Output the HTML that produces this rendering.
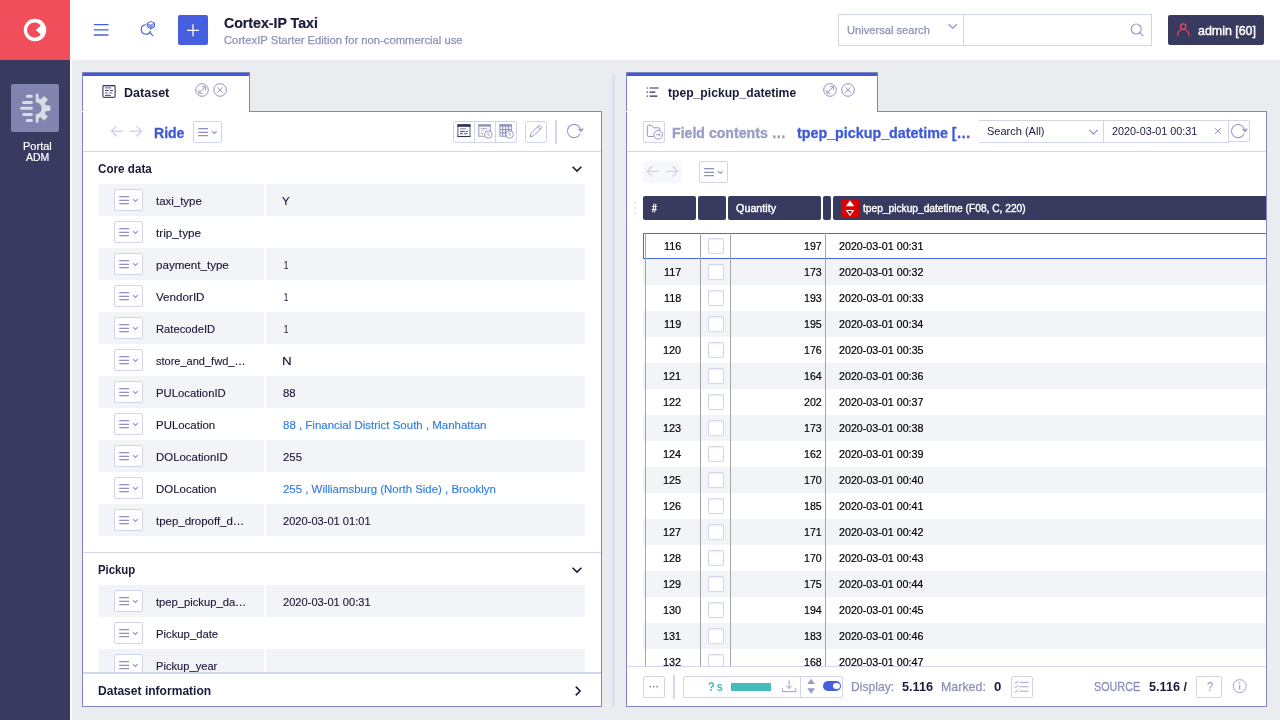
<!DOCTYPE html>
<html lang="en">
<head>
<meta charset="utf-8">
<title>Cortex-IP Taxi</title>
<style>
html,body{margin:0;padding:0}
body{width:1280px;height:720px;overflow:hidden;position:relative;background:#ebecf0;font-family:"Liberation Sans",sans-serif;}
.a{position:absolute;box-sizing:border-box}
.t{position:absolute;white-space:nowrap;line-height:normal;transform-origin:0 0;font-family:"Liberation Sans",sans-serif}
svg{position:absolute;overflow:visible}
.btn{position:absolute;box-sizing:border-box;background:#fff;border:1px solid #d0d5ea;border-radius:2px}
.rowbg{position:absolute;background:#f3f4f8}
#root{position:absolute;left:0;top:0;width:1280px;height:720px;will-change:transform}

</style>
</head>
<body>
<div id="root">
<div class="a" style="left:70px;top:0;width:1210px;height:60px;background:#fff"></div>
<div class="a" style="left:70px;top:60px;width:2px;height:660px;background:#fbfbfd"></div>
<div class="a" style="left:0;top:0;width:70px;height:720px;background:#383a60"></div>
<div class="a" style="left:0;top:0;width:70px;height:60px;background:#f04e5a"></div>
<svg style="left:0;top:0" width="70" height="60" viewBox="0 0 70 60"><circle cx="35" cy="30" r="11.25" fill="#fff"/><circle cx="34.6" cy="30" r="7.6" fill="#f04e5a"/><polygon points="35.6,30 43.5,23.6 43.5,36.4" fill="#fff"/></svg>
<div class="a" style="left:11px;top:84px;width:48px;height:48px;background:#8284b0;border-radius:2px"></div>
<svg style="left:11px;top:84px" width="48" height="48" viewBox="0 0 48 48" fill="none" stroke="#dadbe6" stroke-width="3" stroke-linecap="round">
<path d="M16.2 12.3H20.4M12.6 18.4H20.4M10.5 24.3H20.4M12.6 30.4H20.4M16.2 36.5H20.4"/>
<path stroke="none" fill="#dadbe6" d="M24.70 9.65L27.31 9.65L27.60 14.26A10.4 10.4 0 0 1 29.71 15.14L33.18 12.08L36.87 15.77L33.81 19.24A10.4 10.4 0 0 1 34.69 21.35L39.30 21.64L39.30 26.86L34.69 27.15A10.4 10.4 0 0 1 33.81 29.26L36.87 32.73L33.18 36.42L29.71 33.36A10.4 10.4 0 0 1 27.60 34.24L27.31 38.85L24.70 38.85L24.70 30.25A6 6 0 0 0 24.70 18.25z"/>
</svg>
<span class="t" style="left:22.89px;top:140.00px;font-size:10.5px;color:#fff;transform:scaleX(1.0483);-webkit-text-stroke:0.2px #fff">Portal</span>
<span class="t" style="left:25.80px;top:150.80px;font-size:10.5px;color:#fff;transform:scaleX(0.9962);-webkit-text-stroke:0.2px #fff">ADM</span>
<svg style="left:90px;top:20px" width="24" height="20" viewBox="90 20 24 20" stroke="#4460df" stroke-width="1.3" fill="none"><path d="M93.8 24.6H108.5M93.8 29.8H108.5M93.8 35H108.5"/></svg>
<svg style="left:138px;top:18px" width="20" height="22" viewBox="138 18 20 22" stroke="#4460df" stroke-width="1.15" fill="none" stroke-linecap="round" stroke-linejoin="round">
<path d="M150.4 31.2a4.75 4.75 0 1 1-5-6.5"/><path d="M149.9 32.6L152.8 35.7"/>
<path stroke-width="0.95" d="M147.3 23.3L150.9 21.4L154.5 23.3L150.9 25.2zM147.3 23.3V26.9L150.9 28.9L154.5 26.9V23.3M147.3 25.4L150.9 27.3L154.5 25.4M150.9 25.2V28.9"/>
</svg>
<div class="a" style="left:178px;top:15px;width:30px;height:30px;background:#455fe0;border-radius:2px"></div>
<svg style="left:178px;top:15px" width="30" height="30" viewBox="0 0 30 30" stroke="#fff" stroke-width="1.3"><path d="M9 15.3H21M15 9.3V21.3"/></svg>
<span class="t" style="left:224.28px;top:14.75px;font-size:14px;color:#1a1b3a;transform:scaleX(1.0107);font-weight:700;-webkit-text-stroke:0.2px #1a1b3a">Cortex-IP Taxi</span>
<span class="t" style="left:224.26px;top:34.00px;font-size:11.2px;color:#8d90b9;transform:scaleX(1.0053);-webkit-text-stroke:0.25px #8d90b9">CortexIP Starter Edition for non-commercial use</span>
<div class="a" style="left:838px;top:14px;width:314px;height:32px;background:#fff;border:1px solid #d0d5ea"></div>
<div class="a" style="left:963px;top:14px;width:1px;height:32px;background:#d0d5ea"></div>
<span class="t" style="left:847.06px;top:23.00px;font-size:11.6px;color:#8d90b9;transform:scaleX(0.9593);-webkit-text-stroke:0.25px #8d90b9">Universal search</span>
<svg style="left:946px;top:22px" width="14" height="10" viewBox="946 22 14 10" stroke="#8d90b9" stroke-width="1.2" fill="none"><path d="M948.6 24.2L952.7 28.2L956.8 24.2"/></svg>
<svg style="left:1128px;top:20px" width="20" height="20" viewBox="1128 20 20 20" stroke="#9a9dc6" stroke-width="1.2" fill="none" stroke-linecap="round"><circle cx="1136.2" cy="29" r="5"/><path d="M1139.9 32.7L1143 35.6"/></svg>
<div class="a" style="left:1168px;top:15px;width:96px;height:30px;background:#383a60;border-radius:2px"></div>
<svg style="left:1174px;top:20px" width="20" height="20" viewBox="1174 20 20 20" stroke="#f04e5a" stroke-width="1.2" fill="none" stroke-linecap="round"><circle cx="1183.2" cy="26.6" r="2.7"/><path d="M1177.6 35.2a5.7 5.7 0 0 1 11.4 0"/></svg>
<span class="t" style="left:1197.64px;top:23.20px;font-size:13px;color:#fff;transform:scaleX(0.9551);-webkit-text-stroke:0.45px #fff">admin [60]</span>
<div class="a" style="left:82px;top:111px;width:520px;height:596px;background:#fff;border:1px solid #8286be"></div>
<div class="a" style="left:82px;top:72px;width:168px;height:40px;background:#fff;border:1px solid #8286be;border-bottom:none"></div>
<div class="a" style="left:83px;top:73px;width:166px;height:3px;background:#4059dc"></div>
<svg style="left:102px;top:84px" width="15" height="15" viewBox="102 84 15 15" fill="none"><rect x="102.9" y="85.6" width="12.2" height="11.8" rx="1.2" stroke="#4b4d70" stroke-width="1.25"/><path stroke="#2a2b4c" stroke-width="1.25" d="M102.9 85.6H115.1" opacity="0.6"/><path stroke="#7a7c9c" stroke-width="1.3" d="M105 87.9H111.2M105 92.8H107.7M109.2 92.8H112.3"/><path stroke="#2a2b4c" stroke-width="0.9" d="M105 90.45H108.8M110 90.45H113M105 95.4H110.8"/></svg>
<span class="t" style="left:124.05px;top:85.70px;font-size:12px;color:#1a1b3a;transform:scaleX(1.0443);font-weight:700">Dataset</span>
<svg style="left:194.1px;top:82px" width="40" height="16" viewBox="0 0 40 16" fill="none" stroke="#9092c2" stroke-width="1"><circle cx="8" cy="8" r="6.3"/><path stroke-width="0.95" d="M4.9 11.2L11.4 4.7M8.1 4.7H11.4V8.3M4.9 7.9V11.2H8.4"/><circle cx="26.05" cy="8" r="6.3"/><path stroke-width="0.95" d="M23.35 5.3L28.75 10.7M28.75 5.3L23.35 10.7"/></svg>
<svg style="left:0;top:0" width="1280" height="720" viewBox="0 0 1280 720" fill="none" stroke="#c9cdec" stroke-width="1.2" stroke-linecap="round" stroke-linejoin="round"><path d="M122.7 131.2H111.5M116.2 126.4L111.4 131.2L116.2 136"/><path d="M130.2 131.2H141.4M136.7 126.4L141.5 131.2L136.7 136"/></svg>
<span class="t" style="left:153.52px;top:124.80px;font-size:14.6px;color:#3d5ad9;transform:scaleX(0.9616);font-weight:700;-webkit-text-stroke:0.3px #3d5ad9">Ride</span>
<div class="btn" style="left:193px;top:121px;width:29px;height:22px"></div><svg style="left:193px;top:121px" width="29" height="22" viewBox="0 0 29 22" fill="none" stroke="#8e90c2"><path stroke-width="1.15" d="M5.2 7.55H15M5.2 11.3H15M5.2 14.65H15"/><path stroke-width="1.1" d="M19.1 10.2L21.4 12.5L23.7 10.2"/></svg>
<div class="btn" style="left:453px;top:121px;width:64px;height:22px"></div>
<div class="a" style="left:474px;top:121px;width:1px;height:22px;background:#d0d5ea"></div><div class="a" style="left:495px;top:121px;width:1px;height:22px;background:#d0d5ea"></div>
<svg style="left:453px;top:121px" width="22" height="22" viewBox="453 121 22 22" fill="none"><rect x="457.9" y="125" width="12.1" height="11.5" stroke="#5a5c80" stroke-width="1"/><rect x="457.4" y="124.2" width="13.1" height="2.6" fill="#2f3058"/><path stroke="#2f3058" stroke-width="1.1" d="M457.6 136.5H470.3"/><path stroke="#8183a6" stroke-width="1" d="M460 128.8H466.3"/><path stroke="#2f3058" stroke-width="0.9" d="M460 131.4H465M465.8 131.4H468M460 133.7H463M464.2 133.7H467.5"/></svg>
<svg style="left:474px;top:121px" width="22" height="22" viewBox="474 121 22 22" fill="none"><rect x="478.8" y="125" width="11.4" height="11.2" stroke="#9496c4" stroke-width="1"/><rect x="478.3" y="124.2" width="12.4" height="2.5" fill="#9496c4"/><path stroke="#9496c4" stroke-width="0.9" d="M481 128.7H487M481 133.5H483"/><path stroke="#c5c7e0" stroke-width="0.9" d="M481 130.8H484"/><circle cx="488.3" cy="134.5" r="3.75" fill="#fff" stroke="#9496c4" stroke-width="0.95"/><path stroke="#9496c4" stroke-width="0.95" d="M488 132.3V134.6L489.5 135.9"/></svg>
<svg style="left:495px;top:121px" width="22" height="22" viewBox="495 121 22 22" fill="none"><rect x="499.9" y="125" width="11.4" height="11.2" stroke="#9496c4" stroke-width="1"/><rect x="499.4" y="124.2" width="12.4" height="2.5" fill="#9496c4"/><path stroke="#9496c4" stroke-width="1.1" d="M502.7 126V136.2M505.6 126V136.2M508.5 126V136.2M499.9 129.6H511.3M499.9 132.9H511.3"/><circle cx="509.6" cy="134.5" r="3.75" fill="#fff" stroke="#9496c4" stroke-width="0.95"/><path stroke="#9496c4" stroke-width="0.95" d="M509.3 132.3V134.6L510.8 135.9"/></svg>
<div class="btn" style="left:525px;top:121px;width:22px;height:22px"></div>
<svg style="left:525px;top:121px" width="22" height="22" viewBox="0 0 22 22" fill="none" stroke="#9496c4" stroke-width="0.95" stroke-linejoin="round"><path d="M5.1 15.9L6.3 12.2L14.3 4.2L16.8 6.7L8.8 14.7Z"/><path d="M12.7 5.8L15.2 8.3M5.5 14.6L6.4 15.5"/></svg>
<div class="a" style="left:555px;top:120px;width:1.7px;height:24px;background:#d3d7ea"></div>
<svg style="left:0;top:0" width="1280" height="720" viewBox="0 0 1280 720" fill="none" stroke="#9496c4" stroke-width="1.05" stroke-linecap="round" stroke-linejoin="round"><path d="M579.98 134.00A6.6 6.6 0 1 1 580.66 130.31"/><path d="M578.70 129.60L581.20 131.80L583.20 129.20z" fill="#9496c4" stroke-width="0.7"/></svg>
<div class="a" style="left:83px;top:151px;width:518px;height:1px;background:#d3d7ec"></div>
<span class="t" style="left:98.36px;top:161.90px;font-size:12px;color:#1a1b3a;transform:scaleX(0.9712);font-weight:700">Core data</span>
<svg style="left:571px;top:165px" width="12" height="8" viewBox="0 0 12 8" fill="none" stroke="#1a1b3a" stroke-width="1.6"><path d="M1.6 1.8L6 6.1L10.4 1.8"/></svg>
<div class="rowbg" style="left:99px;top:184px;width:165px;height:32px"></div><div class="rowbg" style="left:266px;top:184px;width:319px;height:32px"></div><div class="btn" style="left:114px;top:189px;width:29px;height:22px"></div><svg style="left:114px;top:189px" width="29" height="22" viewBox="0 0 29 22" fill="none" stroke="#8e90c2"><path stroke-width="1.15" d="M5.2 7.55H15M5.2 11.3H15M5.2 14.65H15"/><path stroke-width="1.1" d="M19.1 10.2L21.4 12.5L23.7 10.2"/></svg><span class="t" style="left:155.98px;top:193.80px;font-size:11.8px;color:#1a1b3a;transform:scaleX(0.9700);-webkit-text-stroke:0.15px #1a1b3a">taxi_type</span><span class="t" style="left:281.86px;top:193.80px;font-size:11.8px;color:#1a1b3a;transform:scaleX(0.9688);-webkit-text-stroke:0.15px #1a1b3a">Y</span>
<div class="btn" style="left:114px;top:221px;width:29px;height:22px"></div><svg style="left:114px;top:221px" width="29" height="22" viewBox="0 0 29 22" fill="none" stroke="#8e90c2"><path stroke-width="1.15" d="M5.2 7.55H15M5.2 11.3H15M5.2 14.65H15"/><path stroke-width="1.1" d="M19.1 10.2L21.4 12.5L23.7 10.2"/></svg><span class="t" style="left:156.09px;top:225.80px;font-size:11.8px;color:#1a1b3a;transform:scaleX(0.9964);-webkit-text-stroke:0.15px #1a1b3a">trip_type</span>
<div class="rowbg" style="left:99px;top:248px;width:165px;height:32px"></div><div class="rowbg" style="left:266px;top:248px;width:319px;height:32px"></div><div class="btn" style="left:114px;top:253px;width:29px;height:22px"></div><svg style="left:114px;top:253px" width="29" height="22" viewBox="0 0 29 22" fill="none" stroke="#8e90c2"><path stroke-width="1.15" d="M5.2 7.55H15M5.2 11.3H15M5.2 14.65H15"/><path stroke-width="1.1" d="M19.1 10.2L21.4 12.5L23.7 10.2"/></svg><span class="t" style="left:155.57px;top:257.80px;font-size:11.8px;color:#1a1b3a;transform:scaleX(0.9826);-webkit-text-stroke:0.15px #1a1b3a">payment_type</span><span class="t" style="left:284.20px;top:257.80px;font-size:11.8px;color:#1a1b3a;transform:scaleX(0.6333);-webkit-text-stroke:0.15px #1a1b3a">1</span>
<div class="btn" style="left:114px;top:285px;width:29px;height:22px"></div><svg style="left:114px;top:285px" width="29" height="22" viewBox="0 0 29 22" fill="none" stroke="#8e90c2"><path stroke-width="1.15" d="M5.2 7.55H15M5.2 11.3H15M5.2 14.65H15"/><path stroke-width="1.1" d="M19.1 10.2L21.4 12.5L23.7 10.2"/></svg><span class="t" style="left:155.75px;top:289.80px;font-size:11.8px;color:#1a1b3a;transform:scaleX(0.9863);-webkit-text-stroke:0.15px #1a1b3a">VendorID</span><span class="t" style="left:284.20px;top:289.80px;font-size:11.8px;color:#1a1b3a;transform:scaleX(0.6333);-webkit-text-stroke:0.15px #1a1b3a">1</span>
<div class="rowbg" style="left:99px;top:312px;width:165px;height:32px"></div><div class="rowbg" style="left:266px;top:312px;width:319px;height:32px"></div><div class="btn" style="left:114px;top:317px;width:29px;height:22px"></div><svg style="left:114px;top:317px" width="29" height="22" viewBox="0 0 29 22" fill="none" stroke="#8e90c2"><path stroke-width="1.15" d="M5.2 7.55H15M5.2 11.3H15M5.2 14.65H15"/><path stroke-width="1.1" d="M19.1 10.2L21.4 12.5L23.7 10.2"/></svg><span class="t" style="left:155.62px;top:321.80px;font-size:11.8px;color:#1a1b3a;transform:scaleX(0.9485);-webkit-text-stroke:0.15px #1a1b3a">RatecodeID</span><span class="t" style="left:284.20px;top:321.80px;font-size:11.8px;color:#1a1b3a;transform:scaleX(0.6333);-webkit-text-stroke:0.15px #1a1b3a">1</span>
<div class="btn" style="left:114px;top:349px;width:29px;height:22px"></div><svg style="left:114px;top:349px" width="29" height="22" viewBox="0 0 29 22" fill="none" stroke="#8e90c2"><path stroke-width="1.15" d="M5.2 7.55H15M5.2 11.3H15M5.2 14.65H15"/><path stroke-width="1.1" d="M19.1 10.2L21.4 12.5L23.7 10.2"/></svg><span class="t" style="left:155.56px;top:353.80px;font-size:11.8px;color:#1a1b3a;transform:scaleX(0.9338);-webkit-text-stroke:0.15px #1a1b3a">store_and_fwd_…</span><span class="t" style="left:281.84px;top:353.80px;font-size:11.8px;color:#1a1b3a;transform:scaleX(1.1359);-webkit-text-stroke:0.15px #1a1b3a">N</span>
<div class="rowbg" style="left:99px;top:376px;width:165px;height:32px"></div><div class="rowbg" style="left:266px;top:376px;width:319px;height:32px"></div><div class="btn" style="left:114px;top:381px;width:29px;height:22px"></div><svg style="left:114px;top:381px" width="29" height="22" viewBox="0 0 29 22" fill="none" stroke="#8e90c2"><path stroke-width="1.15" d="M5.2 7.55H15M5.2 11.3H15M5.2 14.65H15"/><path stroke-width="1.1" d="M19.1 10.2L21.4 12.5L23.7 10.2"/></svg><span class="t" style="left:155.60px;top:385.80px;font-size:11.8px;color:#1a1b3a;transform:scaleX(0.9580);-webkit-text-stroke:0.15px #1a1b3a">PULocationID</span><span class="t" style="left:282.67px;top:385.80px;font-size:11.8px;color:#1a1b3a;transform:scaleX(0.9628);-webkit-text-stroke:0.15px #1a1b3a">88</span>
<div class="btn" style="left:114px;top:413px;width:29px;height:22px"></div><svg style="left:114px;top:413px" width="29" height="22" viewBox="0 0 29 22" fill="none" stroke="#8e90c2"><path stroke-width="1.15" d="M5.2 7.55H15M5.2 11.3H15M5.2 14.65H15"/><path stroke-width="1.1" d="M19.1 10.2L21.4 12.5L23.7 10.2"/></svg><span class="t" style="left:155.87px;top:417.80px;font-size:11.8px;color:#1a1b3a;transform:scaleX(0.9699);-webkit-text-stroke:0.15px #1a1b3a">PULocation</span><span class="t" style="left:282.93px;top:417.80px;font-size:11.8px;color:#2f7ce6;transform:scaleX(0.9729);-webkit-text-stroke:0.15px #2f7ce6">88 , Financial District South , Manhattan</span>
<div class="rowbg" style="left:99px;top:440px;width:165px;height:32px"></div><div class="rowbg" style="left:266px;top:440px;width:319px;height:32px"></div><div class="btn" style="left:114px;top:445px;width:29px;height:22px"></div><svg style="left:114px;top:445px" width="29" height="22" viewBox="0 0 29 22" fill="none" stroke="#8e90c2"><path stroke-width="1.15" d="M5.2 7.55H15M5.2 11.3H15M5.2 14.65H15"/><path stroke-width="1.1" d="M19.1 10.2L21.4 12.5L23.7 10.2"/></svg><span class="t" style="left:155.87px;top:449.80px;font-size:11.8px;color:#1a1b3a;transform:scaleX(0.9681);-webkit-text-stroke:0.15px #1a1b3a">DOLocationID</span><span class="t" style="left:282.59px;top:449.80px;font-size:11.8px;color:#1a1b3a;transform:scaleX(0.9632);-webkit-text-stroke:0.15px #1a1b3a">255</span>
<div class="btn" style="left:114px;top:477px;width:29px;height:22px"></div><svg style="left:114px;top:477px" width="29" height="22" viewBox="0 0 29 22" fill="none" stroke="#8e90c2"><path stroke-width="1.15" d="M5.2 7.55H15M5.2 11.3H15M5.2 14.65H15"/><path stroke-width="1.1" d="M19.1 10.2L21.4 12.5L23.7 10.2"/></svg><span class="t" style="left:155.86px;top:481.80px;font-size:11.8px;color:#1a1b3a;transform:scaleX(0.9711);-webkit-text-stroke:0.15px #1a1b3a">DOLocation</span><span class="t" style="left:282.57px;top:481.80px;font-size:11.8px;color:#2f7ce6;transform:scaleX(0.9692);-webkit-text-stroke:0.15px #2f7ce6">255 , Williamsburg (North Side) , Brooklyn</span>
<div class="rowbg" style="left:99px;top:504px;width:165px;height:32px"></div><div class="rowbg" style="left:266px;top:504px;width:319px;height:32px"></div><div class="btn" style="left:114px;top:509px;width:29px;height:22px"></div><svg style="left:114px;top:509px" width="29" height="22" viewBox="0 0 29 22" fill="none" stroke="#8e90c2"><path stroke-width="1.15" d="M5.2 7.55H15M5.2 11.3H15M5.2 14.65H15"/><path stroke-width="1.1" d="M19.1 10.2L21.4 12.5L23.7 10.2"/></svg><span class="t" style="left:156.09px;top:513.80px;font-size:11.8px;color:#1a1b3a;transform:scaleX(0.9709);-webkit-text-stroke:0.15px #1a1b3a">tpep_dropoff_d…</span><span class="t" style="left:283.20px;top:513.80px;font-size:11.8px;color:#1a1b3a;transform:scaleX(0.9408);-webkit-text-stroke:0.15px #1a1b3a">2020-03-01 01:01</span>
<div class="a" style="left:83px;top:552px;width:518px;height:1px;background:#d3d7ec"></div>
<span class="t" style="left:97.72px;top:562.80px;font-size:12px;color:#1a1b3a;transform:scaleX(0.9469);font-weight:700">Pickup</span>
<svg style="left:571px;top:566px" width="12" height="8" viewBox="0 0 12 8" fill="none" stroke="#1a1b3a" stroke-width="1.6"><path d="M1.6 1.8L6 6.1L10.4 1.8"/></svg>
<div class="a" style="left:83px;top:585px;width:518px;height:88px;overflow:hidden"><div class="a" style="left:-83px;top:-585px;width:1280px;height:720px">
<div class="rowbg" style="left:99px;top:585px;width:165px;height:32px"></div><div class="rowbg" style="left:266px;top:585px;width:319px;height:32px"></div><div class="btn" style="left:114px;top:590px;width:29px;height:22px"></div><svg style="left:114px;top:590px" width="29" height="22" viewBox="0 0 29 22" fill="none" stroke="#8e90c2"><path stroke-width="1.15" d="M5.2 7.55H15M5.2 11.3H15M5.2 14.65H15"/><path stroke-width="1.1" d="M19.1 10.2L21.4 12.5L23.7 10.2"/></svg><span class="t" style="left:155.67px;top:594.80px;font-size:11.8px;color:#1a1b3a;transform:scaleX(0.9498);-webkit-text-stroke:0.15px #1a1b3a">tpep_pickup_da…</span><span class="t" style="left:283.20px;top:594.80px;font-size:11.8px;color:#1a1b3a;transform:scaleX(0.9408);-webkit-text-stroke:0.15px #1a1b3a">2020-03-01 00:31</span>
<div class="btn" style="left:114px;top:622px;width:29px;height:22px"></div><svg style="left:114px;top:622px" width="29" height="22" viewBox="0 0 29 22" fill="none" stroke="#8e90c2"><path stroke-width="1.15" d="M5.2 7.55H15M5.2 11.3H15M5.2 14.65H15"/><path stroke-width="1.1" d="M19.1 10.2L21.4 12.5L23.7 10.2"/></svg><span class="t" style="left:155.89px;top:626.80px;font-size:11.8px;color:#1a1b3a;transform:scaleX(0.9572);-webkit-text-stroke:0.15px #1a1b3a">Pickup_date</span>
<div class="rowbg" style="left:99px;top:649px;width:165px;height:32px"></div><div class="rowbg" style="left:266px;top:649px;width:319px;height:32px"></div><div class="btn" style="left:114px;top:654px;width:29px;height:22px"></div><svg style="left:114px;top:654px" width="29" height="22" viewBox="0 0 29 22" fill="none" stroke="#8e90c2"><path stroke-width="1.15" d="M5.2 7.55H15M5.2 11.3H15M5.2 14.65H15"/><path stroke-width="1.1" d="M19.1 10.2L21.4 12.5L23.7 10.2"/></svg><span class="t" style="left:155.88px;top:658.80px;font-size:11.8px;color:#1a1b3a;transform:scaleX(0.9442);-webkit-text-stroke:0.15px #1a1b3a">Pickup_year</span>
</div></div>
<div class="a" style="left:83px;top:672px;width:518px;height:2px;background:#d3d7ec"></div>
<span class="t" style="left:97.67px;top:684.00px;font-size:12px;color:#1a1b3a;transform:scaleX(1.0044);font-weight:700">Dataset information</span>
<svg style="left:573.5px;top:684.5px" width="8" height="12" viewBox="0 0 8 12" fill="none" stroke="#1a1b3a" stroke-width="1.6"><path d="M1.8 1.6L6.1 6L1.8 10.4"/></svg>
<div class="a" style="left:612px;top:73px;width:3px;height:634px;background:#dee1ef"></div>
<div class="a" style="left:82px;top:111px;width:1px;height:1px;background:#fff"></div>
<div class="a" style="left:626px;top:111px;width:641px;height:596px;background:#fff;border:1px solid #8286be"></div>
<div class="a" style="left:626px;top:72px;width:252px;height:40px;background:#fff;border:1px solid #8286be;border-bottom:none"></div>
<div class="a" style="left:627px;top:73px;width:250px;height:3px;background:#4059dc"></div>
<svg style="left:646px;top:86px" width="14" height="12" viewBox="0 0 14 12" fill="none" stroke="#2a2b4c" stroke-width="1.2"><path d="M0.7 2H1.9M0.7 6.1H1.9M0.7 10.2H1.9M3.6 2H12.7M3.6 6.1H9.3M3.6 10.2H11.4"/></svg>
<span class="t" style="left:667.83px;top:85.70px;font-size:12px;color:#1a1b3a;transform:scaleX(1.0114);font-weight:700">tpep_pickup_datetime</span>
<svg style="left:821.5px;top:82px" width="40" height="16" viewBox="0 0 40 16" fill="none" stroke="#9092c2" stroke-width="1"><circle cx="8" cy="8" r="6.3"/><path stroke-width="0.95" d="M4.9 11.2L11.4 4.7M8.1 4.7H11.4V8.3M4.9 7.9V11.2H8.4"/><circle cx="26" cy="8" r="6.3"/><path stroke-width="0.95" d="M23.3 5.3L28.7 10.7M28.7 5.3L23.3 10.7"/></svg>
<div class="btn" style="left:643px;top:121px;width:22px;height:22px"></div>
<svg style="left:643px;top:121px" width="22" height="22" viewBox="0 0 22 22" fill="none" stroke="#9496c4" stroke-width="1" stroke-linejoin="round"><path d="M10.7 15.5H5.3Q4.3 15.5 4.3 14.5V5.3Q4.3 4.3 5.3 4.3H8.6L10.4 6.8H15.8Q16.8 6.8 16.8 7.8V9.6"/><circle cx="15.2" cy="13.75" r="4.3" fill="#fff"/><path d="M13 13.75H17.2M15.7 12.2L17.3 13.75L15.7 15.3" stroke-width="0.9"/></svg>
<span class="t" style="left:672.09px;top:124.80px;font-size:14.6px;color:#9a9dc6;transform:scaleX(0.9679);font-weight:700;-webkit-text-stroke:0.35px #9a9dc6">Field contents …</span>
<span class="t" style="left:796.70px;top:124.80px;font-size:14.6px;color:#3d5ad9;transform:scaleX(0.9790);font-weight:700;-webkit-text-stroke:0.3px #3d5ad9">tpep_pickup_datetime […</span>
<div class="a" style="left:979px;top:120px;width:250px;height:23px;background:#fff;border:1px solid #d0d5ea;border-left:none"></div>
<div class="a" style="left:1103px;top:120px;width:1px;height:23px;background:#d0d5ea"></div>
<span class="t" style="left:986.82px;top:125.20px;font-size:11.2px;color:#20213f;transform:scaleX(0.9839)">Search (All)</span>
<svg style="left:1087px;top:127px" width="14" height="10" viewBox="1087 127 14 10" stroke="#8a8dc0" stroke-width="1.1" fill="none"><path d="M1089.2 129.8L1093.4 134L1097.6 129.8"/></svg>
<span class="t" style="left:1112.23px;top:125.20px;font-size:11.2px;color:#20213f;transform:scaleX(0.9659)">2020-03-01 00:31</span>
<svg style="left:1212px;top:126px" width="12" height="12" viewBox="1212 126 12 12" stroke="#8a8dc0" stroke-width="0.9" fill="none"><path d="M1214.9 128.1L1220.9 134.1M1220.9 128.1L1214.9 134.1"/></svg>
<div class="btn" style="left:1228px;top:120px;width:22px;height:22px;border-radius:0 2px 2px 0"></div>
<svg style="left:0;top:0" width="1280" height="720" viewBox="0 0 1280 720" fill="none" stroke="#9496c4" stroke-width="1.05" stroke-linecap="round" stroke-linejoin="round"><path d="M1243.98 134.10A6.6 6.6 0 1 1 1244.66 130.41"/><path d="M1242.70 129.70L1245.20 131.90L1247.20 129.30z" fill="#9496c4" stroke-width="0.7"/></svg>
<div class="a" style="left:627px;top:151px;width:639px;height:1px;background:#d3d7ec"></div>
<div class="a" style="left:643px;top:161px;width:39px;height:22px;background:#f7f8fb;border-radius:2px"></div>
<svg style="left:0;top:0" width="1280" height="720" viewBox="0 0 1280 720" fill="none" stroke="#cdd1ec" stroke-width="1.2" stroke-linecap="round" stroke-linejoin="round"><path d="M658.5 171.3H647.3M652 166.5L647.2 171.3L652 176.1"/><path d="M666.4 171.3H677.6M672.9 166.5L677.7 171.3L672.9 176.1"/></svg>
<div class="btn" style="left:699px;top:161px;width:29px;height:22px"></div><svg style="left:699px;top:161px" width="29" height="22" viewBox="0 0 29 22" fill="none" stroke="#8e90c2"><path stroke-width="1.15" d="M5.2 7.55H15M5.2 11.3H15M5.2 14.65H15"/><path stroke-width="1.1" d="M19.1 10.2L21.4 12.5L23.7 10.2"/></svg>
<div class="a" style="left:643.2px;top:196px;width:52.8px;height:24px;background:#383a60;border-radius:2px"></div>
<div class="a" style="left:698.2px;top:196px;width:27.7px;height:24px;background:#383a60;border-radius:2px"></div>
<div class="a" style="left:728.1px;top:196px;width:92.8px;height:24px;background:#383a60;border-radius:2px"></div>
<div class="a" style="left:823px;top:196px;width:7.9px;height:24px;background:#383a60;border-radius:2px"></div>
<div class="a" style="left:833.3px;top:196px;width:433px;height:24px;background:#383a60;border-radius:2px 0 0 2px"></div>
<div class="a" style="left:634px;top:202px;width:2px;height:2px;border-radius:1px;background:#e3e5ee"></div>
<div class="a" style="left:634px;top:207px;width:2px;height:2px;border-radius:1px;background:#e3e5ee"></div>
<div class="a" style="left:634px;top:212px;width:2px;height:2px;border-radius:1px;background:#e3e5ee"></div>
<span class="t" style="left:651.93px;top:203.20px;font-size:10px;color:#fff;transform:scaleX(0.8439);-webkit-text-stroke:0.4px #fff">#</span>
<span class="t" style="left:735.66px;top:202.20px;font-size:10.6px;color:#fff;transform:scaleX(1.0174);-webkit-text-stroke:0.4px #fff">Quantity</span>
<div class="a" style="left:841px;top:199px;width:18px;height:18px;background:#db0000"></div>
<svg style="left:841px;top:199px" width="18" height="18" viewBox="841 199 18 18"><path d="M850 200.3L854.2 206.2H845.8z" fill="#fff"/><path d="M846.7 210.5H853.3L850 215.3z" fill="none" stroke="#fff" stroke-width="1.1"/></svg>
<span class="t" style="left:862.77px;top:202.30px;font-size:10.6px;color:#fff;transform:scaleX(0.9625);-webkit-text-stroke:0.4px #fff">tpep_pickup_datetime (F08, C, 220)</span>
<div class="a" style="left:627px;top:226px;width:639px;height:440px;overflow:hidden"><div class="a" style="left:-627px;top:-226px;width:1280px;height:720px">
<div class="rowbg" style="left:643px;top:259px;width:623px;height:26px"></div>
<div class="rowbg" style="left:643px;top:311px;width:623px;height:26px"></div>
<div class="rowbg" style="left:643px;top:363px;width:623px;height:26px"></div>
<div class="rowbg" style="left:643px;top:415px;width:623px;height:26px"></div>
<div class="rowbg" style="left:643px;top:467px;width:623px;height:26px"></div>
<div class="rowbg" style="left:643px;top:519px;width:623px;height:26px"></div>
<div class="rowbg" style="left:643px;top:571px;width:623px;height:26px"></div>
<div class="rowbg" style="left:643px;top:623px;width:623px;height:26px"></div>
<div class="a" style="left:643px;top:233px;width:624px;height:26px;border:1px solid #4a66e0;border-right:none"></div>
<div class="a" style="left:645px;top:233px;width:1px;height:440px;background:#a4a4a4"></div>
<div class="a" style="left:700px;top:233px;width:1px;height:440px;background:#a4a4a4"></div>
<div class="a" style="left:730px;top:233px;width:1px;height:440px;background:#a4a4a4"></div>
<div class="a" style="left:825px;top:233px;width:1px;height:440px;background:#a4a4a4"></div>
<div class="a" style="left:708px;top:238px;width:16px;height:16px;background:#fff;border:1px solid #d3d8ea;border-radius:1px;box-shadow:inset 0 1px 2px #eceef5"></div>
<span class="t" style="left:664.06px;top:240.10px;font-size:11.2px;color:#000;transform:scaleX(0.9700);-webkit-text-stroke:0.2px #000">116</span>
<span class="t" style="left:803.88px;top:240.10px;font-size:11.2px;color:#000;transform:scaleX(0.9500);-webkit-text-stroke:0.2px #000">197</span>
<span class="t" style="left:838.69px;top:240.10px;font-size:11.2px;color:#000;transform:scaleX(0.9561);-webkit-text-stroke:0.2px #000">2020-03-01 00:31</span>
<div class="a" style="left:708px;top:264px;width:16px;height:16px;background:#fff;border:1px solid #d3d8ea;border-radius:1px;box-shadow:inset 0 1px 2px #eceef5"></div>
<span class="t" style="left:664.06px;top:266.10px;font-size:11.2px;color:#000;transform:scaleX(0.9700);-webkit-text-stroke:0.2px #000">117</span>
<span class="t" style="left:803.88px;top:266.10px;font-size:11.2px;color:#000;transform:scaleX(0.9500);-webkit-text-stroke:0.2px #000">173</span>
<span class="t" style="left:838.68px;top:266.10px;font-size:11.2px;color:#000;transform:scaleX(0.9563);-webkit-text-stroke:0.2px #000">2020-03-01 00:32</span>
<div class="a" style="left:708px;top:290px;width:16px;height:16px;background:#fff;border:1px solid #d3d8ea;border-radius:1px;box-shadow:inset 0 1px 2px #eceef5"></div>
<span class="t" style="left:664.06px;top:292.10px;font-size:11.2px;color:#000;transform:scaleX(0.9700);-webkit-text-stroke:0.2px #000">118</span>
<span class="t" style="left:803.88px;top:292.10px;font-size:11.2px;color:#000;transform:scaleX(0.9500);-webkit-text-stroke:0.2px #000">193</span>
<span class="t" style="left:838.94px;top:292.10px;font-size:11.2px;color:#000;transform:scaleX(0.9574);-webkit-text-stroke:0.2px #000">2020-03-01 00:33</span>
<div class="a" style="left:708px;top:316px;width:16px;height:16px;background:#fff;border:1px solid #d3d8ea;border-radius:1px;box-shadow:inset 0 1px 2px #eceef5"></div>
<span class="t" style="left:664.06px;top:318.10px;font-size:11.2px;color:#000;transform:scaleX(0.9700);-webkit-text-stroke:0.2px #000">119</span>
<span class="t" style="left:803.88px;top:318.10px;font-size:11.2px;color:#000;transform:scaleX(0.9500);-webkit-text-stroke:0.2px #000">195</span>
<span class="t" style="left:838.94px;top:318.10px;font-size:11.2px;color:#000;transform:scaleX(0.9545);-webkit-text-stroke:0.2px #000">2020-03-01 00:34</span>
<div class="a" style="left:708px;top:342px;width:16px;height:16px;background:#fff;border:1px solid #d3d8ea;border-radius:1px;box-shadow:inset 0 1px 2px #eceef5"></div>
<span class="t" style="left:663.09px;top:344.10px;font-size:11.2px;color:#000;transform:scaleX(0.9700);-webkit-text-stroke:0.2px #000">120</span>
<span class="t" style="left:803.88px;top:344.10px;font-size:11.2px;color:#000;transform:scaleX(0.9500);-webkit-text-stroke:0.2px #000">176</span>
<span class="t" style="left:838.94px;top:344.10px;font-size:11.2px;color:#000;transform:scaleX(0.9573);-webkit-text-stroke:0.2px #000">2020-03-01 00:35</span>
<div class="a" style="left:708px;top:368px;width:16px;height:16px;background:#fff;border:1px solid #d3d8ea;border-radius:1px;box-shadow:inset 0 1px 2px #eceef5"></div>
<span class="t" style="left:663.13px;top:370.10px;font-size:11.2px;color:#000;transform:scaleX(0.9700);-webkit-text-stroke:0.2px #000">121</span>
<span class="t" style="left:803.88px;top:370.10px;font-size:11.2px;color:#000;transform:scaleX(0.9500);-webkit-text-stroke:0.2px #000">164</span>
<span class="t" style="left:838.87px;top:370.10px;font-size:11.2px;color:#000;transform:scaleX(0.9565);-webkit-text-stroke:0.2px #000">2020-03-01 00:36</span>
<div class="a" style="left:708px;top:394px;width:16px;height:16px;background:#fff;border:1px solid #d3d8ea;border-radius:1px;box-shadow:inset 0 1px 2px #eceef5"></div>
<span class="t" style="left:663.14px;top:396.10px;font-size:11.2px;color:#000;transform:scaleX(0.9700);-webkit-text-stroke:0.2px #000">122</span>
<span class="t" style="left:803.88px;top:396.10px;font-size:11.2px;color:#000;transform:scaleX(0.9500);-webkit-text-stroke:0.2px #000">202</span>
<span class="t" style="left:838.69px;top:396.10px;font-size:11.2px;color:#000;transform:scaleX(0.9562);-webkit-text-stroke:0.2px #000">2020-03-01 00:37</span>
<div class="a" style="left:708px;top:420px;width:16px;height:16px;background:#fff;border:1px solid #d3d8ea;border-radius:1px;box-shadow:inset 0 1px 2px #eceef5"></div>
<span class="t" style="left:663.11px;top:422.10px;font-size:11.2px;color:#000;transform:scaleX(0.9700);-webkit-text-stroke:0.2px #000">123</span>
<span class="t" style="left:803.88px;top:422.10px;font-size:11.2px;color:#000;transform:scaleX(0.9500);-webkit-text-stroke:0.2px #000">173</span>
<span class="t" style="left:838.87px;top:422.10px;font-size:11.2px;color:#000;transform:scaleX(0.9564);-webkit-text-stroke:0.2px #000">2020-03-01 00:38</span>
<div class="a" style="left:708px;top:446px;width:16px;height:16px;background:#fff;border:1px solid #d3d8ea;border-radius:1px;box-shadow:inset 0 1px 2px #eceef5"></div>
<span class="t" style="left:662.99px;top:448.10px;font-size:11.2px;color:#000;transform:scaleX(0.9700);-webkit-text-stroke:0.2px #000">124</span>
<span class="t" style="left:803.88px;top:448.10px;font-size:11.2px;color:#000;transform:scaleX(0.9500);-webkit-text-stroke:0.2px #000">162</span>
<span class="t" style="left:838.69px;top:448.10px;font-size:11.2px;color:#000;transform:scaleX(0.9562);-webkit-text-stroke:0.2px #000">2020-03-01 00:39</span>
<div class="a" style="left:708px;top:472px;width:16px;height:16px;background:#fff;border:1px solid #d3d8ea;border-radius:1px;box-shadow:inset 0 1px 2px #eceef5"></div>
<span class="t" style="left:663.11px;top:474.10px;font-size:11.2px;color:#000;transform:scaleX(0.9700);-webkit-text-stroke:0.2px #000">125</span>
<span class="t" style="left:803.88px;top:474.10px;font-size:11.2px;color:#000;transform:scaleX(0.9500);-webkit-text-stroke:0.2px #000">170</span>
<span class="t" style="left:838.94px;top:474.10px;font-size:11.2px;color:#000;transform:scaleX(0.9570);-webkit-text-stroke:0.2px #000">2020-03-01 00:40</span>
<div class="a" style="left:708px;top:498px;width:16px;height:16px;background:#fff;border:1px solid #d3d8ea;border-radius:1px;box-shadow:inset 0 1px 2px #eceef5"></div>
<span class="t" style="left:663.11px;top:500.10px;font-size:11.2px;color:#000;transform:scaleX(0.9700);-webkit-text-stroke:0.2px #000">126</span>
<span class="t" style="left:803.88px;top:500.10px;font-size:11.2px;color:#000;transform:scaleX(0.9500);-webkit-text-stroke:0.2px #000">185</span>
<span class="t" style="left:838.69px;top:500.10px;font-size:11.2px;color:#000;transform:scaleX(0.9561);-webkit-text-stroke:0.2px #000">2020-03-01 00:41</span>
<div class="a" style="left:708px;top:524px;width:16px;height:16px;background:#fff;border:1px solid #d3d8ea;border-radius:1px;box-shadow:inset 0 1px 2px #eceef5"></div>
<span class="t" style="left:663.13px;top:526.10px;font-size:11.2px;color:#000;transform:scaleX(0.9700);-webkit-text-stroke:0.2px #000">127</span>
<span class="t" style="left:803.88px;top:526.10px;font-size:11.2px;color:#000;transform:scaleX(0.9500);-webkit-text-stroke:0.2px #000">171</span>
<span class="t" style="left:838.68px;top:526.10px;font-size:11.2px;color:#000;transform:scaleX(0.9563);-webkit-text-stroke:0.2px #000">2020-03-01 00:42</span>
<div class="a" style="left:708px;top:550px;width:16px;height:16px;background:#fff;border:1px solid #d3d8ea;border-radius:1px;box-shadow:inset 0 1px 2px #eceef5"></div>
<span class="t" style="left:663.11px;top:552.10px;font-size:11.2px;color:#000;transform:scaleX(0.9700);-webkit-text-stroke:0.2px #000">128</span>
<span class="t" style="left:803.88px;top:552.10px;font-size:11.2px;color:#000;transform:scaleX(0.9500);-webkit-text-stroke:0.2px #000">170</span>
<span class="t" style="left:838.94px;top:552.10px;font-size:11.2px;color:#000;transform:scaleX(0.9574);-webkit-text-stroke:0.2px #000">2020-03-01 00:43</span>
<div class="a" style="left:708px;top:576px;width:16px;height:16px;background:#fff;border:1px solid #d3d8ea;border-radius:1px;box-shadow:inset 0 1px 2px #eceef5"></div>
<span class="t" style="left:663.13px;top:578.10px;font-size:11.2px;color:#000;transform:scaleX(0.9700);-webkit-text-stroke:0.2px #000">129</span>
<span class="t" style="left:803.88px;top:578.10px;font-size:11.2px;color:#000;transform:scaleX(0.9500);-webkit-text-stroke:0.2px #000">175</span>
<span class="t" style="left:838.94px;top:578.10px;font-size:11.2px;color:#000;transform:scaleX(0.9545);-webkit-text-stroke:0.2px #000">2020-03-01 00:44</span>
<div class="a" style="left:708px;top:602px;width:16px;height:16px;background:#fff;border:1px solid #d3d8ea;border-radius:1px;box-shadow:inset 0 1px 2px #eceef5"></div>
<span class="t" style="left:663.09px;top:604.10px;font-size:11.2px;color:#000;transform:scaleX(0.9700);-webkit-text-stroke:0.2px #000">130</span>
<span class="t" style="left:803.88px;top:604.10px;font-size:11.2px;color:#000;transform:scaleX(0.9500);-webkit-text-stroke:0.2px #000">194</span>
<span class="t" style="left:838.94px;top:604.10px;font-size:11.2px;color:#000;transform:scaleX(0.9573);-webkit-text-stroke:0.2px #000">2020-03-01 00:45</span>
<div class="a" style="left:708px;top:628px;width:16px;height:16px;background:#fff;border:1px solid #d3d8ea;border-radius:1px;box-shadow:inset 0 1px 2px #eceef5"></div>
<span class="t" style="left:663.13px;top:630.10px;font-size:11.2px;color:#000;transform:scaleX(0.9700);-webkit-text-stroke:0.2px #000">131</span>
<span class="t" style="left:803.88px;top:630.10px;font-size:11.2px;color:#000;transform:scaleX(0.9500);-webkit-text-stroke:0.2px #000">183</span>
<span class="t" style="left:838.87px;top:630.10px;font-size:11.2px;color:#000;transform:scaleX(0.9565);-webkit-text-stroke:0.2px #000">2020-03-01 00:46</span>
<div class="a" style="left:708px;top:654px;width:16px;height:16px;background:#fff;border:1px solid #d3d8ea;border-radius:1px;box-shadow:inset 0 1px 2px #eceef5"></div>
<span class="t" style="left:663.14px;top:656.10px;font-size:11.2px;color:#000;transform:scaleX(0.9700);-webkit-text-stroke:0.2px #000">132</span>
<span class="t" style="left:803.88px;top:656.10px;font-size:11.2px;color:#000;transform:scaleX(0.9500);-webkit-text-stroke:0.2px #000">168</span>
<span class="t" style="left:838.69px;top:656.10px;font-size:11.2px;color:#000;transform:scaleX(0.9562);-webkit-text-stroke:0.2px #000">2020-03-01 00:47</span>
</div></div>
<div class="a" style="left:627px;top:666px;width:639px;height:1px;background:#d3d7ec"></div>
<div class="btn" style="left:643px;top:676px;width:21.5px;height:21.5px"></div>
<svg style="left:643px;top:676px" width="21.5" height="21.5" viewBox="0 0 21.5 21.5" fill="#8a8dc0"><circle cx="7.2" cy="10.7" r="0.9"/><circle cx="10.7" cy="10.7" r="0.9"/><circle cx="14.2" cy="10.7" r="0.9"/></svg>
<div class="a" style="left:673.4px;top:675px;width:1.5px;height:24px;background:#d3d7ec"></div>
<div class="btn" style="left:683px;top:676px;width:159.5px;height:21.5px"></div>
<div class="a" style="left:800px;top:676px;width:1px;height:21.5px;background:#d0d5ea"></div>
<span class="t" style="left:707.83px;top:679.90px;font-size:12.4px;color:#3fbab4;transform:scaleX(0.8792);font-weight:700;word-spacing:-1px">? s</span>
<div class="a" style="left:731px;top:683px;width:40px;height:8px;background:#45bcb8"></div>
<svg style="left:780px;top:678px" width="18" height="16" viewBox="780 678 18 16" fill="none" stroke="#9a9dc6" stroke-width="1"><path d="M782.4 688.2V691.6H795.8V688.2M789.1 680V688.4M786.2 685.6L789.1 688.5L792 685.6"/></svg>
<svg style="left:805px;top:677px" width="12" height="18" viewBox="805 677 12 18" fill="#9a9dc6"><path d="M811.1 678.7L815 684H807.2zM807.2 688.3H815L811.1 693.8z"/></svg>
<div class="a" style="left:823px;top:681px;width:18px;height:9.6px;border-radius:5px;background:#4460df"></div><div class="a" style="left:833.4px;top:682.6px;width:6.4px;height:6.4px;border-radius:4px;background:#fff"></div>
<span class="t" style="left:850.75px;top:678.70px;font-size:12.8px;color:#8d90b9;transform:scaleX(0.9463);-webkit-text-stroke:0.25px #8d90b9">Display:</span>
<span class="t" style="left:901.77px;top:679.70px;font-size:12.6px;color:#1a1b3a;transform:scaleX(1.0047);font-weight:700">5.116</span>
<span class="t" style="left:940.92px;top:678.70px;font-size:12.8px;color:#8d90b9;transform:scaleX(0.9705);-webkit-text-stroke:0.25px #8d90b9">Marked:</span>
<span class="t" style="left:994.45px;top:679.70px;font-size:12.6px;color:#1a1b3a;transform:scaleX(1.0505);font-weight:700">0</span>
<div class="btn" style="left:1011px;top:676px;width:21.5px;height:21.5px"></div>
<svg style="left:1011px;top:676px" width="21.5" height="21.5" viewBox="0 0 21.5 21.5" fill="none" stroke="#9a9dc6" stroke-width="0.9"><path d="M8.6 6.4H17.6M8.6 10.8H17.6M8.6 15.2H17.6M3.6 6.2L4.8 7.4L6.9 4.8M3.6 10.6L4.8 11.8L6.9 9.2M3.6 15L4.8 16.2L6.9 13.6"/></svg>
<span class="t" style="left:1093.74px;top:678.70px;font-size:12.8px;color:#8d90b9;transform:scaleX(0.8426);-webkit-text-stroke:0.3px #8d90b9">SOURCE</span>
<span class="t" style="left:1148.73px;top:679.70px;font-size:12.6px;color:#1a1b3a;transform:scaleX(1.0043);font-weight:700">5.116 /</span>
<div class="btn" style="left:1196px;top:676px;width:25.5px;height:21.5px"></div>
<span class="t" style="left:1207.25px;top:679.70px;font-size:12px;color:#8d90b9;transform:scaleX(0.9000)">?</span>
<svg style="left:1232px;top:678px" width="16" height="16" viewBox="1232 678 16 16" fill="none" stroke="#9a9dc6" stroke-width="0.9"><circle cx="1239.7" cy="686.1" r="6.5"/><path d="M1239.7 684.8V689.6" stroke-width="1.1"/><circle cx="1239.7" cy="682.7" r="0.7" fill="#9a9dc6" stroke="none"/></svg>
<div class="a" style="left:626px;top:111px;width:1px;height:1px;background:#fff"></div>
</div>
</body>
</html>
